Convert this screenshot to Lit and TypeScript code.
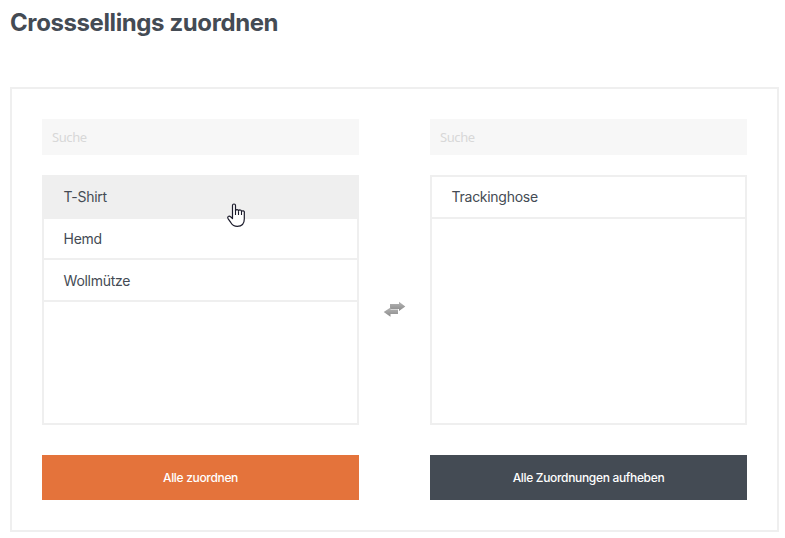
import { LitElement, html, css } from "lit";
import { customElement, property } from "lit/decorators.js";
import { classMap } from "lit/directives/class-map.js";

@customElement("assign-column")
class AssignColumn extends LitElement {
  @property({ type: Array }) items: string[] = [];
  @property() active = "";
  @property() action = "";
  @property() tone = "primary";

  static styles = css`
    :host {
      display: flex;
      flex-direction: column;
      width: 317px;
      font-family: Inter, "Liberation Sans", sans-serif;
    }
    .search {
      box-sizing: border-box;
      width: 100%;
      height: 36px;
      padding: 0 10px 1px;
      border: 0;
      border-radius: 0;
      background: #f7f7f7;
      font: 13px "Noto Sans", sans-serif;
      letter-spacing: -0.4px;
    }
    .search::placeholder {
      color: #d8d8d8;
      opacity: 1;
    }
    .list {
      box-sizing: border-box;
      height: 250px;
      margin: 20px 0 30px;
      padding: 0;
      border: 2px solid #efefef;
      list-style: none;
    }
    .item {
      box-sizing: border-box;
      height: 41.6px;
      padding: 0.4px 0 0 19.6px;
      border-bottom: 2px solid #efefef;
      color: #444b54;
      font-size: 14px;
      line-height: 40px;
      letter-spacing: -0.28px;
    }
    .item.active {
      background: #efefef;
    }
    .button {
      height: 45px;
      padding: 0;
      border: 0;
      color: #fff;
      font: 500 12px/44px Inter, "Liberation Sans", sans-serif;
      letter-spacing: -0.33px;
    }
    .primary {
      background: #e4733b;
    }
    .dark {
      background: #444b54;
    }
  `;

  render() {
    return html`
      <input class="search" type="text" placeholder="Suche" />
      <ul class="list">
        ${this.items.map(
          (name) => html`<li class=${classMap({ item: true, active: name === this.active })}>${name}</li>`
        )}
      </ul>
      <button class="button ${this.tone}">${this.action}</button>
    `;
  }
}

@customElement("app-root")
class AppRoot extends LitElement {
  static styles = css`
    :host {
      display: block;
      box-sizing: border-box;
      height: 538px;
      padding: 7px 6px 0 10px;
      background: #fff;
      font-family: Inter, "Liberation Sans", sans-serif;
    }
    .title {
      margin: 0 0 48px;
      color: #444b54;
      font-size: 24px;
      font-weight: 650;
      line-height: 32px;
      letter-spacing: -0.4px;
      white-space: nowrap;
    }
    .panel {
      box-sizing: border-box;
      display: flex;
      width: 769px;
      height: 445px;
      padding: 30px;
      border: 2px solid #efefef;
    }
    .swap {
      display: flex;
      width: 71px;
      align-items: center;
      justify-content: center;
    }
    .swap svg {
      display: block;
    }
    .cursor {
      position: absolute;
      left: 227px;
      top: 203px;
    }
  `;

  render() {
    return html`
      <h1 class="title">Crosssellings zuordnen</h1>
      <div class="panel">
        <assign-column
          .items=${["T-Shirt", "Hemd", "Wollmütze"]}
          active="T-Shirt"
          action="Alle zuordnen"
        ></assign-column>
        <div class="swap">
          <svg width="23" height="17" viewBox="0 0 23 17">
            <defs>
              <linearGradient id="g" x1="0" y1="0" x2="0" y2="1">
                <stop offset="0" stop-color="#b6b6b6" />
                <stop offset="1" stop-color="#8a8a8a" />
              </linearGradient>
            </defs>
            <path fill="url(#g)" d="M7 3h9V0.800L22.300 5.500 16 10V8H7z" />
            <path fill="url(#g)" d="M15 8.500v4.500H7.500v2.700L0.700 11 7.500 6.500V8.500z" />
          </svg>
        </div>
        <assign-column
          .items=${["Trackinghose"]}
          action="Alle Zuordnungen aufheben"
          tone="dark"
        ></assign-column>
      </div>
      <svg class="cursor" width="19" height="25" viewBox="0 0 19 25">
        <path
          d="M5.500 15.500V2.500a1.500 1.500 0 0 1 3 0V8a1.500 1.500 0 0 1 3 .2 1.500 1.500 0 0 1 3 .6 1.400 1.400 0 0 1 2.800.8V16c0 4.400-2 7.300-7 7.300-3.500 0-5-1.300-6.400-3.600L1.200 15.800c-1.300-2.200.900-3.600 2.400-2z"
          fill="#fff"
          stroke="#1b1b2b"
          stroke-width="1.200"
          stroke-linejoin="round"
        />
        <path d="M8.500 7.500v4.500M11.500 8.500v3.500M14.500 9v3" fill="none" stroke="#1b1b2b" stroke-width="1.100" />
      </svg>
    `;
  }
}
